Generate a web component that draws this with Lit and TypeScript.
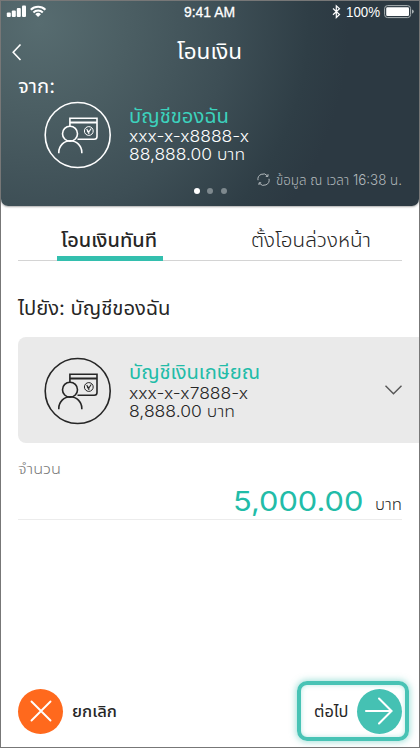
import { LitElement, html, css, svg } from "lit";
import { customElement } from "lit/decorators.js";

/** One line of text fitted to a width; its baseline lies `base` px below the top. */
const line = (text: string, cls: string, width: number, height: number, base: number) => html`
  <svg class="line ${cls}" width=${width} height=${height}>
    <text x="0" y=${base} textLength=${width} lengthAdjust="spacingAndGlyphs">${text}</text>
  </svg>`;

const accountIcon = () => html`
  <svg class="account" width="68" height="68" viewBox="0 0 68 68">
    ${svg`
    <circle cx="33.7" cy="34" r="32.5"/>
    <path d="M25.9 26V17.2H53V35.5Q53 38.3 50.2 38.3H33.5"/>
    <path d="M25.9 21.5H53" stroke-width="2"/>
    <circle cx="26" cy="32.7" r="7.5"/>
    <path d="M14.8 52.3V51.3A11.5 11.5 0 0 1 37.8 51.3V52.3"/>
    <circle cx="44.8" cy="30" r="4.4" stroke-width="1"/>
    <path d="M42.6 28L44.8 31L47.2 27.5M44.8 30V33M43.2 29.2L44 31.4" stroke-width="1.1"/>`}
  </svg>`;

@customElement("app-root")
export class AppRoot extends LitElement {
  static styles = css`
    :host { display: block; }
    * { box-sizing: border-box; }
    svg { display: block; flex: none; overflow: visible; fill: none; }
    .screen { width: 420px; height: 748px; border: 1px solid #777; background: #fff; color: #262626;
      font-family: Inter, "Noto Sans Thai", "Noto Sans", sans-serif; overflow: hidden; display: flex; flex-direction: column; }
    .line text { fill: currentColor; white-space: pre; }
    .head { height: 205px; flex: none; border-radius: 0 0 7px 7px; color: #fff;
      background: radial-gradient(circle at 38px 22px, #576c70 0, #4b5e63 90px, #3d4e55 190px, #2f3e46 270px, #2c3942 310px);
      box-shadow: 0 1px 2px #0005; display: flex; flex-direction: column; }
    .status { height: 22px; display: flex; padding: 4px 5px 0; }
    .status .clock { margin-left: 138px; stroke: #fff; stroke-width: 0.3px; }
    .status .bt { margin-left: 96.5px; }
    .status .pct { margin-left: 5px; }
    .status .bat { margin-left: 4px; }
    .bar { height: 50px; display: flex; padding: 20px 0 0 11px; }
    .bar .title { margin-left: 156px; margin-top: -9px; }
    .from { padding-left: 17px; height: 28px; }
    .acct { display: flex; padding-left: 43px; }
    .acct .lines { margin-left: 16.5px; display: flex; flex-direction: column; }
    .account { stroke: currentColor; stroke-width: 1.6; margin-top: 0.3px; }
    .meta { display: flex; margin-top: 1.7px; }
    .dots { display: flex; gap: 7.5px; padding: 17px 0 0 192.5px; }
    .dots i { width: 6px; height: 6px; border-radius: 50%; background: #7e898e; }
    .dots i:first-child { background: #fff; }
    .refresh { margin: 2.5px 0 0 30px; }
    .stamp { margin-left: 6px; color: #b3babd; }
    .tabs { margin: 21px 17px 0; height: 34px; border-bottom: 1px solid #d4d4d4; display: flex; }
    .tab { width: 106px; height: 34px; margin-left: 39px; border-bottom: 5px solid #33bfae; padding-left: 4px; }
    .tab + svg { margin-left: 88px; }
    .to { padding: 30px 0 0 17px; }
    .card { margin: 6px 0 0 17px; height: 106px; background: #eaeaea; border-radius: 8px 0 0 8px; display: flex; padding-top: 19.5px; flex: none; }
    .card .acct { padding-left: 26px; }
    .card .chev { margin-left: auto; margin-right: 17px; margin-top: 28.5px; }
    .amount { margin: 12px 17px 0; height: 65px; border-bottom: 1.5px solid #ececec; flex: none; }
    .sum { display: flex; justify-content: flex-end; gap: 12px; }
    .foot { margin-top: auto; display: flex; align-items: center; padding: 0 10px 6px 17px; }
    .round { width: 45px; height: 45px; border-radius: 50%; flex: none; display: grid; place-items: center; }
    .cancel { background: #ff691d; }
    .foot > svg { margin-left: 9px; }
    .next { margin-left: auto; width: 112px; height: 60px; border: 4px solid #48c3b5; border-radius: 10px;
      box-shadow: 0 0 6px 1px #48c3b580, inset 0 0 5px #48c3b560; display: flex; align-items: center; padding-left: 12.5px; }
    .next .round { margin-left: 8.5px; background: #45c1b3; }
    .teal { color: #22bca8; } .head .teal { color: #3cd2bd; }
    .f14 { font-size: 14px; } .f15 { font-size: 15px; } .f17 { font-size: 16.5px; }
    .f19 { font-size: 20px; } .f21 { font-size: 22px; } .f27 { font-size: 27.5px; }
    .light { font-weight: 300; } .med { font-weight: 500; }
    .sys { font-family: "Liberation Sans", sans-serif; }
    .grey { color: #777; }
  `;

  render() {
    return html`
      <div class="screen">
        <div class="head">
          <div class="status">
            <svg width="40" height="14" viewBox="0 0 40 14">${svg`
              <g fill="#fff"><rect x="0.8" y="7.5" width="4" height="4.5" rx="1"/><rect x="5.8" y="5.5" width="4" height="6.5" rx="1"/><rect x="10.8" y="3" width="4" height="9" rx="1"/><rect x="16" y="0.5" width="4" height="11.5" rx="1"/></g>
              <g stroke="#fff" stroke-width="2.1"><path d="M24.8 4.7A10.4 10.4 0 0 1 39.4 4.7"/><path d="M27.4 7.4A6.8 6.8 0 0 1 36.8 7.4"/></g>
              <path fill="#fff" d="M32.1 12L29.3 9.2A4 4 0 0 1 34.9 9.2Z"/>`}</svg>
            ${line("9:41 AM", "clock f14 sys", 51, 16, 12.3)}
            <svg class="bt" width="9" height="14" viewBox="0 0 9 14"><path stroke="#fff" stroke-width="1.2" d="M1 3.5L7.5 9.5L4.3 12.5V0.8L7.5 3.8L1 9.8"/></svg>
            ${line("100%", "pct f14 sys", 34, 16, 12.3)}
            <svg class="bat" width="31" height="14" viewBox="0 0 31 14"><rect x="0.6" y="0.6" width="26" height="12" rx="3" stroke="#a9b1b3"/><rect x="2.2" y="2.2" width="22.8" height="8.8" rx="1.3" fill="#fff"/><path d="M28 4.5Q29.8 5 29.8 6.6Q29.8 8.2 28 8.7Z" fill="#a9b1b3"/></svg>
          </div>
          <div class="bar">
            <svg width="9" height="18" viewBox="0 0 9 18"><path d="M8.5 1.5L1.2 9.2L8.5 17" stroke="#fff" stroke-width="1.6"/></svg>
            ${line("โอนเงิน", "title f21", 65, 30, 25)}
          </div>
          <div class="from">${line("จาก:", "f19", 37, 28, 20)}</div>
          <div class="acct">
            ${accountIcon()}
            <div class="lines">
              ${line("บัญชีของฉัน", "teal f19", 100, 22, 22)}
              ${line("xxx-x-x8888-x", "f17 light", 120, 19, 19)}
              ${line("88,888.00 บาท", "f17 light", 116, 19, 18.3)}
            </div>
          </div>
          <div class="meta">
            <div class="dots"><i></i><i></i><i></i></div>
            <svg class="refresh" width="13" height="13" viewBox="0 0 13 13"><path d="M1 7.2A5.4 5.4 0 0 1 10.6 3M12 5.8A5.4 5.4 0 0 1 2.4 10.2M11 1.2V3.4H8.8M2 12V9.8H4.2" stroke="#b3babd"/></svg>
            ${line("ข้อมูล ณ เวลา 16:38 น.", "stamp f14 light", 126, 18, 13.7)}
          </div>
        </div>
        <div class="tabs">
          <div class="tab">${line("โอนเงินทันที", "f19 med", 96, 29, 20)}</div>
          ${line("ตั้งโอนล่วงหน้า", "f19 light", 120, 30, 20)}
        </div>
        <div class="to">${line("ไปยัง: บัญชีของฉัน", "f19", 152.5, 40, 23.5)}</div>
        <div class="card">
          <div class="acct">
            ${accountIcon()}
            <div class="lines">
              ${line("บัญชีเงินเกษียณ", "teal f19", 131, 22, 22.3)}
              ${line("xxx-x-x7888-x", "f17 light", 119, 19, 19.8)}
              ${line("8,888.00 บาท", "f17 light", 106, 19, 18.7)}
            </div>
          </div>
          <svg class="chev" width="17" height="10" viewBox="0 0 17 10"><path d="M0.5 0.8L8.5 8.7L16.5 0.8" stroke="#555" stroke-width="1.4"/></svg>
        </div>
        <div class="amount">
          ${line("จำนวน", "f15 grey light", 43, 30, 19)}
          <div class="sum">
            ${line("5,000.00", "f27 teal", 130.5, 30, 26.3)}
            ${line("บาท", "f17 light", 27, 30, 25)}
          </div>
        </div>
        <div class="foot">
          <div class="round cancel"><svg width="22" height="22" viewBox="0 0 22 22"><path d="M1.5 1.5L20.5 20.5M20.5 1.5L1.5 20.5" stroke="#fff" stroke-width="1.9" stroke-linecap="round"/></svg></div>
          ${line("ยกเลิก", "f17 med", 45, 24, 18)}
          <div class="next">
            ${line("ต่อไป", "f17", 34.5, 24, 18)}
            <div class="round"><svg width="28" height="28" viewBox="0 0 28 28"><path d="M1 14H26.5M14 1.5L26.5 14L14 26.5" stroke="#fff" stroke-width="2.1" stroke-linecap="round"/></svg></div>
          </div>
        </div>
      </div>`;
  }
}
